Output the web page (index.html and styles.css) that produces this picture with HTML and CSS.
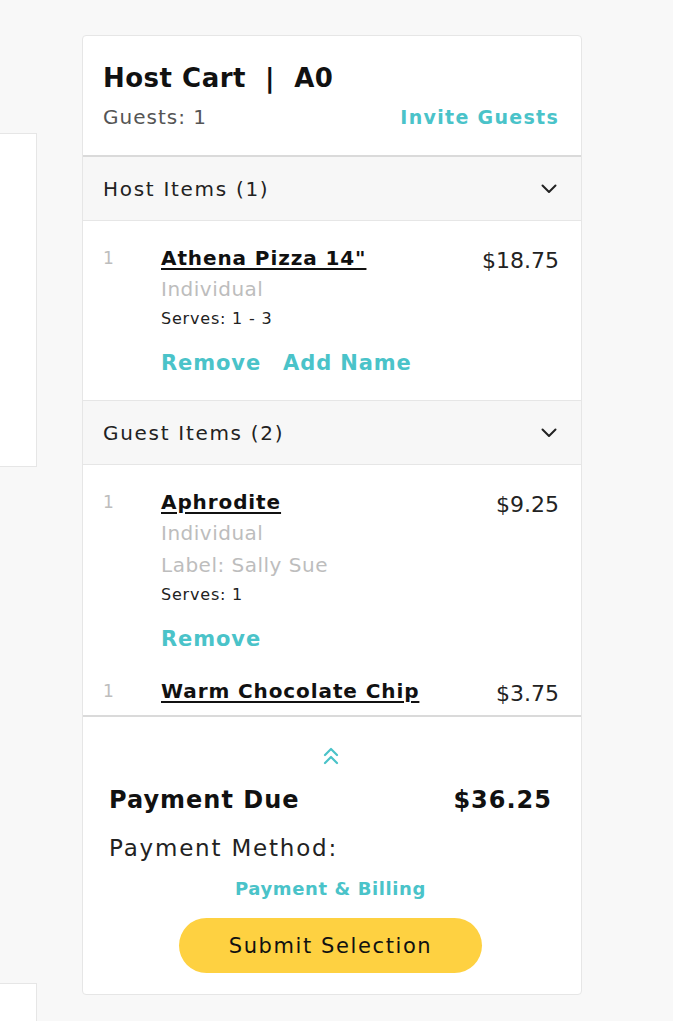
FILE: index.html
```html
<!DOCTYPE html>
<html lang="en">
<head>
    <meta charset="UTF-8">
    <meta name="viewport" content="width=device-width, initial-scale=1.0">
    <title>Host Cart</title>
    <link rel="stylesheet" href="styles.css">
</head>
<body>
    <div class="page">
        <div class="side">
            <div class="side-panel"></div>
            <div class="side-panel side-panel-low"></div>
        </div>

        <aside class="cart">
            <header class="cart-head">
                <h1>Host Cart &nbsp;|&nbsp; A0</h1>
                <div class="cart-sub">
                    <span>Guests: 1</span>
                    <a href="#" class="link">Invite Guests</a>
                </div>
            </header>

            <div class="cart-list">
                <div class="section-head">
                    <span>Host Items (1)</span>
                    <svg class="chev" width="16" height="10" viewBox="0 0 16 10"><path d="M1.5 1.5 8 8l6.5-6.5" fill="none" stroke="#222" stroke-width="2" stroke-linecap="round" stroke-linejoin="round"/></svg>
                </div>
                <div class="items">
                    <div class="item">
                        <span class="qty">1</span>
                        <div class="info">
                            <a href="#" class="name">Athena Pizza 14"</a>
                            <div class="muted">Individual</div>
                            <div class="serves">Serves: 1 - 3</div>
                            <div class="actions">
                                <a href="#" class="link">Remove</a>
                                <a href="#" class="link">Add Name</a>
                            </div>
                        </div>
                        <span class="price">$18.75</span>
                    </div>
                </div>

                <div class="section-head">
                    <span>Guest Items (2)</span>
                    <svg class="chev" width="16" height="10" viewBox="0 0 16 10"><path d="M1.5 1.5 8 8l6.5-6.5" fill="none" stroke="#222" stroke-width="2" stroke-linecap="round" stroke-linejoin="round"/></svg>
                </div>
                <div class="items">
                    <div class="item">
                        <span class="qty">1</span>
                        <div class="info">
                            <a href="#" class="name">Aphrodite</a>
                            <div class="muted">Individual</div>
                            <div class="muted">Label: Sally Sue</div>
                            <div class="serves">Serves: 1</div>
                            <div class="actions">
                                <a href="#" class="link">Remove</a>
                            </div>
                        </div>
                        <span class="price">$9.25</span>
                    </div>
                    <div class="item">
                        <span class="qty">1</span>
                        <div class="info">
                            <a href="#" class="name">Warm Chocolate Chip</a>
                        </div>
                        <span class="price">$3.75</span>
                    </div>
                </div>
            </div>

            <footer class="cart-foot">
                <svg class="expand" width="18" height="20" viewBox="0 0 18 20"><path d="M3 9l6-6 6 6M3 17l6-6 6 6" fill="none" stroke="#4ac3c9" stroke-width="2.2" stroke-linecap="round" stroke-linejoin="round"/></svg>
                <div class="total">
                    <span>Payment Due</span>
                    <span>$36.25</span>
                </div>
                <div class="method">Payment Method:</div>
                <a href="#" class="link billing">Payment &amp; Billing</a>
                <button class="submit">Submit Selection</button>
            </footer>
        </aside>
    </div>
</body>
</html>
```

FILE: styles.css
```css
:root {
    --bg: #f8f8f8;
    --line: #e6e6e6;
    --text: #1f1f1f;
    --muted: #bdbdbd;
    --teal: #4ac3c9;
    --yellow: #fed141;
}

body {
    margin: 0;
    background: var(--bg);
    color: var(--text);
    font-family: 'DejaVu Sans', 'Inter', sans-serif;
    overflow: hidden;
}

a {
    text-decoration: none;
}

.page {
    display: flex;
    align-items: flex-start;
    gap: 45px;
    padding-top: 35px;
}

.side {
    width: 337px;
    margin-left: -300px;
    display: flex;
    flex-direction: column;
}

.side-panel {
    margin-top: 98px;
    height: 332px;
    background: white;
    border: 1px solid var(--line);
}

.side-panel-low {
    margin-top: 516px;
    height: 200px;
}

.cart {
    width: 498px;
    height: 958px;
    background: white;
    border: 1px solid var(--line);
    border-radius: 4px;
    display: flex;
    flex-direction: column;
    overflow: hidden;
}

/* header */
.cart-head {
    padding: 25px 22px 26px 20px;
    border-bottom: 2px solid #dadada;
}

.cart-head h1 {
    margin: 0;
    font-size: 26px;
    line-height: 34px;
    font-weight: 700;
    letter-spacing: 0.5px;
    color: #111;
}

.cart-sub {
    display: flex;
    justify-content: space-between;
    margin-top: 10px;
    font-size: 20px;
    line-height: 24px;
    letter-spacing: 1px;
    color: #555;
}

.cart-sub .link {
    font-size: 19px;
    letter-spacing: 1.3px;
}

.link {
    color: var(--teal);
    font-weight: 600;
}

/* list */
.cart-list {
    flex: 1;
    overflow: hidden;
}

.section-head {
    display: flex;
    justify-content: space-between;
    align-items: center;
    height: 63px;
    padding: 0 24px 0 20px;
    background: #f7f7f7;
    border-bottom: 1px solid var(--line);
    font-size: 20px;
    letter-spacing: 1.7px;
    color: #222;
}

.items {
    border-bottom: 1px solid var(--line);
}

.item {
    display: flex;
    padding: 22px 22px 22px 20px;
}

.item + .item {
    padding-top: 0;
}

.qty {
    width: 58px;
    flex-shrink: 0;
    font-size: 17px;
    line-height: 30px;
    color: var(--muted);
}

.info {
    flex: 1;
}

.name {
    font-size: 20px;
    line-height: 30px;
    font-weight: 700;
    letter-spacing: 0.9px;
    color: #111;
    text-decoration: underline;
    text-underline-offset: 3px;
}

.muted {
    font-size: 20px;
    line-height: 32px;
    letter-spacing: 0.5px;
    color: var(--muted);
}

.serves {
    font-size: 16px;
    line-height: 28px;
    letter-spacing: 0.8px;
    color: #222;
}

.actions {
    display: flex;
    gap: 22px;
    margin-top: 15px;
    font-size: 21px;
    line-height: 30px;
    letter-spacing: 0.9px;
}

.price {
    font-size: 22px;
    line-height: 36px;
    color: #222;
}

/* footer */
.cart-foot {
    display: flex;
    flex-direction: column;
    align-items: center;
    padding: 29px 29px 21px 26px;
    border-top: 2px solid #dadada;
}

.total {
    align-self: stretch;
    display: flex;
    justify-content: space-between;
    margin-top: 17px;
    font-size: 24px;
    line-height: 34px;
    font-weight: 700;
    letter-spacing: 1px;
    color: #111;
}

.method {
    align-self: stretch;
    margin-top: 16px;
    font-size: 23px;
    line-height: 30px;
    letter-spacing: 1.8px;
    color: #222;
}

.billing {
    margin-top: 13px;
    font-size: 18px;
    line-height: 26px;
    letter-spacing: 0.6px;
}

.submit {
    margin-top: 16px;
    width: 303px;
    height: 55px;
    border: none;
    border-radius: 28px;
    background: var(--yellow);
    font-family: inherit;
    font-size: 21px;
    letter-spacing: 1.6px;
    color: #111;
    cursor: pointer;
}
```
